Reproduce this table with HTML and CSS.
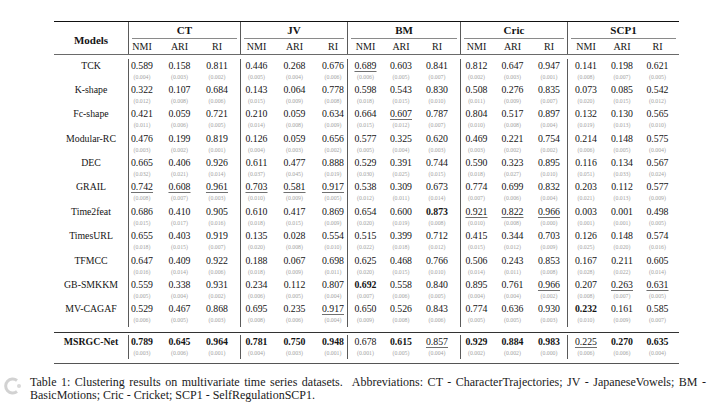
FILE: index.html
```html
<!DOCTYPE html>
<html>
<head>
<meta charset="utf-8">
<link rel="stylesheet" href="styles.css">
</head>
<body>
<div class="page">
  <div class="table">
    <div class="rule-top"></div>
    <div class="head grid">
      <div class="models">Models</div>
      <div class="grp g">CT</div>
      <div class="grp g">JV</div>
      <div class="grp g">BM</div>
      <div class="grp g">Cric</div>
      <div class="grp g">SCP1</div>
      <div class="sub g pr6">NMI</div><div class="sub">ARI</div><div class="sub pr4">RI</div>
      <div class="sub g pr3">NMI</div><div class="sub">ARI</div><div class="sub pl5">RI</div>
      <div class="sub g">NMI</div><div class="sub">ARI</div><div class="sub pr5">RI</div>
      <div class="sub g pr2">NMI</div><div class="sub">ARI</div><div class="sub">RI</div>
      <div class="sub g">NMI</div><div class="sub">ARI</div><div class="sub pr4">RI</div>
    </div>
    <div class="rule-head"></div>
    <div class="body">
      <div class="row val grid"><div>TCK</div><div>0.589</div><div>0.158</div><div>0.811</div><div>0.446</div><div>0.268</div><div>0.676</div><div><span class="u">0.689</span></div><div>0.603</div><div>0.841</div><div>0.812</div><div>0.647</div><div>0.947</div><div>0.141</div><div>0.198</div><div>0.621</div></div>
      <div class="row std grid"><div></div><div>(0.004)</div><div>(0.003)</div><div>(0.002)</div><div>(0.005)</div><div>(0.004)</div><div>(0.006)</div><div>(0.006)</div><div>(0.005)</div><div>(0.007)</div><div>(0.002)</div><div>(0.003)</div><div>(0.001)</div><div>(0.008)</div><div>(0.007)</div><div>(0.005)</div></div>

      <div class="row val grid"><div>K-shape</div><div>0.322</div><div>0.107</div><div>0.684</div><div>0.143</div><div>0.064</div><div>0.778</div><div>0.598</div><div>0.543</div><div>0.830</div><div>0.508</div><div>0.276</div><div>0.835</div><div>0.073</div><div>0.085</div><div>0.542</div></div>
      <div class="row std grid"><div></div><div>(0.012)</div><div>(0.008)</div><div>(0.006)</div><div>(0.015)</div><div>(0.009)</div><div>(0.008)</div><div>(0.018)</div><div>(0.015)</div><div>(0.010)</div><div>(0.011)</div><div>(0.009)</div><div>(0.007)</div><div>(0.020)</div><div>(0.015)</div><div>(0.012)</div></div>

      <div class="row val grid"><div>Fc-shape</div><div>0.421</div><div>0.059</div><div>0.721</div><div>0.210</div><div>0.059</div><div>0.634</div><div>0.664</div><div><span class="u">0.607</span></div><div>0.787</div><div>0.804</div><div>0.517</div><div>0.897</div><div>0.132</div><div>0.130</div><div>0.565</div></div>
      <div class="row std grid"><div></div><div>(0.011)</div><div>(0.006)</div><div>(0.005)</div><div>(0.014)</div><div>(0.008)</div><div>(0.009)</div><div>(0.015)</div><div>(0.012)</div><div>(0.007)</div><div>(0.010)</div><div>(0.008)</div><div>(0.004)</div><div>(0.019)</div><div>(0.013)</div><div>(0.010)</div></div>

      <div class="row val grid"><div>Modular-RC</div><div>0.476</div><div>0.199</div><div>0.819</div><div>0.126</div><div>0.059</div><div>0.656</div><div>0.577</div><div>0.325</div><div>0.620</div><div>0.469</div><div>0.221</div><div>0.754</div><div>0.214</div><div>0.148</div><div>0.575</div></div>
      <div class="row std grid"><div></div><div>(0.003)</div><div>(0.002)</div><div>(0.001)</div><div>(0.004)</div><div>(0.003)</div><div>(0.002)</div><div>(0.005)</div><div>(0.004)</div><div>(0.003)</div><div>(0.003)</div><div>(0.002)</div><div>(0.002)</div><div>(0.006)</div><div>(0.005)</div><div>(0.004)</div></div>

      <div class="row val grid"><div>DEC</div><div>0.665</div><div>0.406</div><div>0.926</div><div>0.611</div><div>0.477</div><div>0.888</div><div>0.529</div><div>0.391</div><div>0.744</div><div>0.590</div><div>0.323</div><div>0.895</div><div>0.116</div><div>0.134</div><div>0.567</div></div>
      <div class="row std grid"><div></div><div>(0.032)</div><div>(0.021)</div><div>(0.014)</div><div>(0.037)</div><div>(0.045)</div><div>(0.019)</div><div>(0.030)</div><div>(0.025)</div><div>(0.015)</div><div>(0.018)</div><div>(0.027)</div><div>(0.010)</div><div>(0.051)</div><div>(0.033)</div><div>(0.024)</div></div>

      <div class="row val grid"><div>GRAIL</div><div><span class="u">0.742</span></div><div><span class="u">0.608</span></div><div><span class="u">0.961</span></div><div><span class="u">0.703</span></div><div><span class="u">0.581</span></div><div><span class="u">0.917</span></div><div>0.538</div><div>0.309</div><div>0.673</div><div>0.774</div><div>0.699</div><div>0.832</div><div>0.203</div><div>0.112</div><div>0.577</div></div>
      <div class="row std grid"><div></div><div>(0.008)</div><div>(0.007)</div><div>(0.003)</div><div>(0.010)</div><div>(0.009)</div><div>(0.005)</div><div>(0.012)</div><div>(0.011)</div><div>(0.014)</div><div>(0.007)</div><div>(0.006)</div><div>(0.004)</div><div>(0.021)</div><div>(0.013)</div><div>(0.009)</div></div>

      <div class="row val grid"><div>Time2feat</div><div>0.686</div><div>0.410</div><div>0.905</div><div>0.610</div><div>0.417</div><div>0.869</div><div>0.654</div><div>0.600</div><div><b>0.873</b></div><div><span class="u">0.921</span></div><div><span class="u">0.822</span></div><div><span class="u">0.966</span></div><div>0.003</div><div>0.001</div><div>0.498</div></div>
      <div class="row std grid"><div></div><div>(0.015)</div><div>(0.017)</div><div>(0.016)</div><div>(0.018)</div><div>(0.015)</div><div>(0.009)</div><div>(0.020)</div><div>(0.019)</div><div>(0.008)</div><div>(0.010)</div><div>(0.008)</div><div>(0.000)</div><div>(0.001)</div><div>(0.001)</div><div>(0.005)</div></div>

      <div class="row val grid"><div>TimesURL</div><div>0.655</div><div>0.403</div><div>0.919</div><div>0.135</div><div>0.028</div><div>0.554</div><div>0.515</div><div>0.399</div><div>0.712</div><div>0.415</div><div>0.344</div><div>0.703</div><div>0.126</div><div>0.148</div><div>0.574</div></div>
      <div class="row std grid"><div></div><div>(0.018)</div><div>(0.015)</div><div>(0.007)</div><div>(0.020)</div><div>(0.008)</div><div>(0.010)</div><div>(0.022)</div><div>(0.018)</div><div>(0.012)</div><div>(0.015)</div><div>(0.012)</div><div>(0.009)</div><div>(0.025)</div><div>(0.020)</div><div>(0.016)</div></div>

      <div class="row val grid"><div>TFMCC</div><div>0.647</div><div>0.409</div><div>0.922</div><div>0.188</div><div>0.067</div><div>0.698</div><div>0.625</div><div>0.468</div><div>0.766</div><div>0.506</div><div>0.243</div><div>0.853</div><div>0.167</div><div>0.211</div><div>0.605</div></div>
      <div class="row std grid"><div></div><div>(0.016)</div><div>(0.014)</div><div>(0.006)</div><div>(0.018)</div><div>(0.009)</div><div>(0.011)</div><div>(0.020)</div><div>(0.015)</div><div>(0.010)</div><div>(0.014)</div><div>(0.011)</div><div>(0.008)</div><div>(0.028)</div><div>(0.022)</div><div>(0.014)</div></div>

      <div class="row val grid"><div>GB-SMKKM</div><div>0.559</div><div>0.338</div><div>0.931</div><div>0.234</div><div>0.112</div><div>0.807</div><div><b>0.692</b></div><div>0.558</div><div>0.840</div><div>0.895</div><div>0.761</div><div><span class="u">0.966</span></div><div>0.207</div><div><span class="u">0.263</span></div><div><span class="u">0.631</span></div></div>
      <div class="row std grid"><div></div><div>(0.005)</div><div>(0.004)</div><div>(0.002)</div><div>(0.006)</div><div>(0.005)</div><div>(0.004)</div><div>(0.007)</div><div>(0.006)</div><div>(0.005)</div><div>(0.004)</div><div>(0.004)</div><div>(0.002)</div><div>(0.008)</div><div>(0.007)</div><div>(0.005)</div></div>

      <div class="row val grid"><div>MV-CAGAF</div><div>0.529</div><div>0.467</div><div>0.868</div><div>0.695</div><div>0.235</div><div><span class="u">0.917</span></div><div>0.650</div><div>0.526</div><div>0.843</div><div>0.774</div><div>0.636</div><div>0.930</div><div><b>0.232</b></div><div>0.161</div><div>0.585</div></div>
      <div class="row std grid"><div></div><div>(0.006)</div><div>(0.005)</div><div>(0.003)</div><div>(0.008)</div><div>(0.006)</div><div>(0.004)</div><div>(0.009)</div><div>(0.008)</div><div>(0.006)</div><div>(0.005)</div><div>(0.005)</div><div>(0.003)</div><div>(0.010)</div><div>(0.009)</div><div>(0.007)</div></div>
    </div>
    <div class="rule-mid"></div>
    <div class="body last">
      <div class="row val grid"><div><b>MSRGC-Net</b></div><div><b>0.789</b></div><div><b>0.645</b></div><div><b>0.964</b></div><div><b>0.781</b></div><div><b>0.750</b></div><div><b>0.948</b></div><div>0.678</div><div><b>0.615</b></div><div><span class="u">0.857</span></div><div><b>0.929</b></div><div><b>0.884</b></div><div><b>0.983</b></div><div><span class="u">0.225</span></div><div><b>0.270</b></div><div><b>0.635</b></div></div>
      <div class="row std grid"><div></div><div>(0.003)</div><div>(0.006)</div><div>(0.001)</div><div>(0.004)</div><div>(0.003)</div><div>(0.001)</div><div>(0.001)</div><div>(0.005)</div><div>(0.004)</div><div>(0.002)</div><div>(0.002)</div><div>(0.000)</div><div>(0.006)</div><div>(0.006)</div><div>(0.004)</div></div>
    </div>
    <div class="rule-bottom"></div>
  </div>

  <div class="caption">
    <span class="line1">Table 1: Clustering results on multivariate time series datasets. &nbsp;Abbreviations: CT - CharacterTrajectories; JV - JapaneseVowels; BM -</span>
    <span class="line2">BasicMotions; Cric - Cricket; SCP1 - SelfRegulationSCP1.</span>
  </div>

  <div class="watermark">
    <svg width="22" height="20" viewBox="0 0 22 20">
      <path d="M15 4.5 A7 7 0 1 0 15 15.5" fill="none" stroke="#c8c8c8" stroke-width="3"/>
      <circle cx="17" cy="10" r="2" fill="#d0d0d0"/>
    </svg>
  </div>
</div>
</body>
</html>
```

FILE: styles.css
```css
html, body {
  margin: 0;
  padding: 0;
  background: #ffffff;
}

body {
  font-family: "Liberation Serif", "Times New Roman", serif;
  color: #141414;
}

.page {
  position: relative;
  width: 726px;
  height: 407px;
  overflow: hidden;
  padding-top: 21px;
  box-sizing: border-box;
}

.table {
  margin-left: 54px;
  width: 625px;
}

.grid {
  display: grid;
  grid-template-columns: 74px 33px 37px 42px 35px 39px 33px 36px 36px 41px 34px 37px 36px 37px 36px 39px;
}

/* rules */
.rule-top {
  border-top: 1.6px solid #111;
}

.rule-head {
  border-top: 0.8px solid #6a6a6a;
  margin-bottom: 3.5px;
}

.rule-mid {
  border-top: 1px solid #333;
  margin-top: 5px;
  margin-bottom: 2px;
}

.rule-bottom {
  border-top: 1.6px solid #555;
  margin-top: 4px;
}

/* header */
.head {
  grid-template-rows: 16.5px 15.5px;
  font-size: 10px;
}

.models {
  grid-row: 1 / 3;
  grid-column: 1;
  display: flex;
  align-items: center;
  justify-content: center;
  font-weight: bold;
  font-size: 11px;
  padding-top: 3px;
}

.grp {
  grid-column: span 3;
  display: flex;
  flex-direction: column;
  justify-content: space-between;
  text-align: center;
  font-weight: bold;
  font-size: 11px;
  line-height: 13px;
  padding-top: 2px;
}

.grp::after {
  content: "";
  display: block;
  border-bottom: 0.8px solid #8a8a8a;
  margin: 0 3px;
}

.sub {
  text-align: center;
  line-height: 15.5px;
  font-size: 10px;
}

.g {
  border-left: 0.9px solid #5a5a5a;
}

.pr2 { padding-right: 2px; }
.pr3 { padding-right: 3px; }
.pr4 { padding-right: 4px; }
.pr5 { padding-right: 5px; }
.pr6 { padding-right: 6px; }
.pl5 { padding-left: 5px; }

/* body rows */
.row > div {
  text-align: center;
  white-space: nowrap;
}

.row > div:nth-child(2),
.row > div:nth-child(5),
.row > div:nth-child(8),
.row > div:nth-child(11),
.row > div:nth-child(14) {
  border-left: 0.9px solid #5a5a5a;
}

.row > div:nth-child(2) { padding-right: 6px; }
.row > div:nth-child(4) { padding-right: 4px; }
.row > div:nth-child(5) { padding-right: 3px; }
.row > div:nth-child(7) { padding-left: 5px; }
.row > div:nth-child(10) { padding-right: 5px; }
.row > div:nth-child(11) { padding-right: 2px; }
.row > div:nth-child(16) { padding-right: 4px; }

.val {
  font-size: 9.8px;
  line-height: 13px;
  height: 13px;
}

.std {
  font-size: 5.8px;
  line-height: 11.4px;
  height: 11.4px;
  color: #a2a2a2;
}

.u {
  text-decoration: underline;
  text-decoration-color: #707070;
  text-decoration-thickness: 0.8px;
  text-underline-offset: 2px;
}

b {
  font-weight: bold;
}

/* caption */
.caption {
  margin: 12px 0 0 30px;
  width: 676px;
  font-size: 12px;
  line-height: 12.6px;
  color: #1a1a1a;
}

.line1 {
  display: block;
  text-align: justify;
  text-align-last: justify;
}

.line2 {
  display: block;
}

.watermark {
  position: absolute;
  left: 2px;
  top: 376px;
  opacity: 0.8;
}
```
